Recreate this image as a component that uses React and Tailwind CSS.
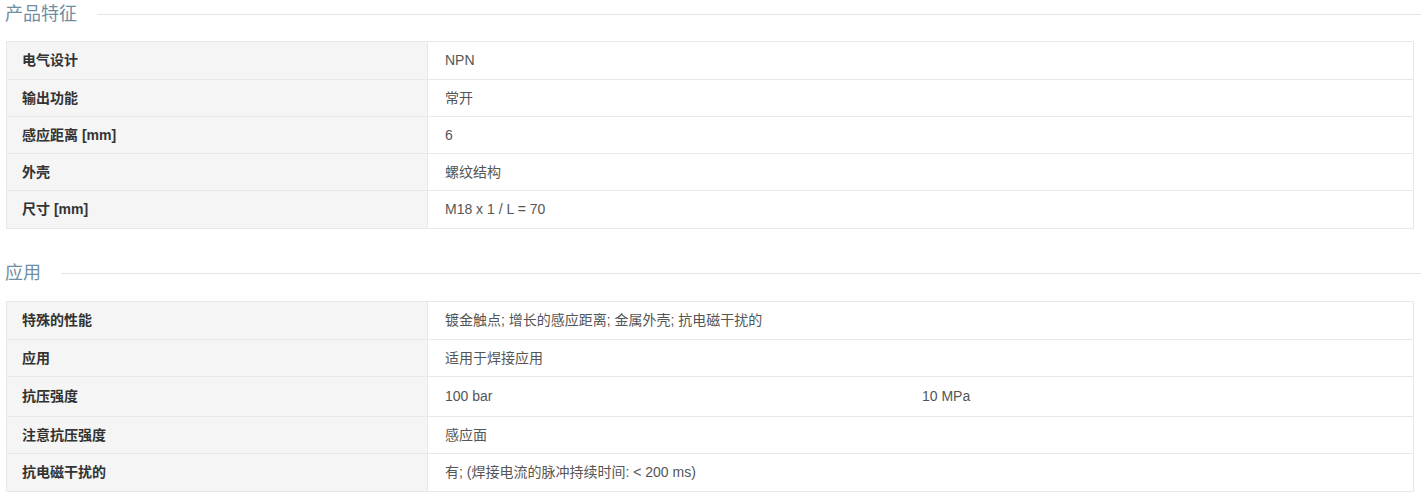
import React from "react";

const font = { fontFamily: '"Liberation Sans", Arial, "Noto Sans CJK SC", sans-serif' };

function Heading({ title }) {
  return (
    <div className="flex items-center h-[28px] pl-[5px]">
      <span className="text-[18px] leading-[28px] text-[#6f8ea3] whitespace-nowrap">{title}</span>
      <div className="flex-1 h-px bg-[#e5e5e5] ml-[20px]" />
    </div>
  );
}

function Row({ label, children, h = "h-[37px]", first }) {
  return (
    <div className={`flex ${h} ${first ? "" : "border-t border-[#e8e8e8]"}`}>
      <div className="w-[421px] shrink-0 bg-[#f5f5f5] border-r border-[#e8e8e8] flex items-center pl-[15px] text-[14px] font-bold text-[#333]">
        {label}
      </div>
      <div className="flex-1 flex items-center pl-[17px] text-[14px] text-[#555]">{children}</div>
    </div>
  );
}

function Table({ children }) {
  return (
    <div className="ml-[6px] mr-[7px] border border-[#e8e8e8]">{children}</div>
  );
}

export default function App() {
  return (
    <div className="bg-white w-[1421px] h-[497px]" style={font}>
      <Heading title="产品特征" />
      <div className="h-[13px]" />
      <Table>
        <Row label="电气设计" first>NPN</Row>
        <Row label="输出功能">常开</Row>
        <Row label="感应距离 [mm]">6</Row>
        <Row label="外壳">螺纹结构</Row>
        <Row label="尺寸 [mm]" h="h-[38px]">M18 x 1 / L = 70</Row>
      </Table>
      <div className="h-[30px]" />
      <Heading title="应用" />
      <div className="h-[14px]" />
      <Table>
        <Row label="特殊的性能" first>镀金触点; 增长的感应距离; 金属外壳; 抗电磁干扰的</Row>
        <Row label="应用">适用于焊接应用</Row>
        <Row label="抗压强度" h="h-[40px]">
          <div className="w-[477px]">100 bar</div>
          <div>10 MPa</div>
        </Row>
        <Row label="注意抗压强度">感应面</Row>
        <Row label="抗电磁干扰的" h="h-[38px]">有; (焊接电流的脉冲持续时间: &lt; 200 ms)</Row>
      </Table>
    </div>
  );
}
